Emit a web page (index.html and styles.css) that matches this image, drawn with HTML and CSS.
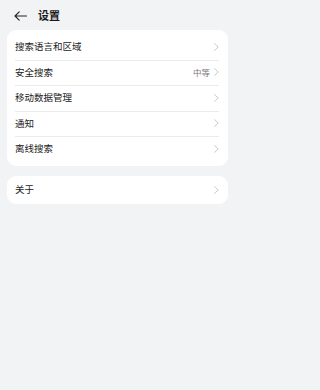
FILE: index.html
```html
<!DOCTYPE html>
<html lang="zh-CN">
<head>
<meta charset="utf-8">
<link rel="stylesheet" href="styles.css">
</head>
<body>
<div class="page">
  <header class="header">
    <svg class="back" width="13" height="10" viewBox="0 0 13 10"><path d="M12.5 5H1M5.2 0.8L1 5l4.2 4.2" fill="none" stroke="#222" stroke-width="1.1" stroke-linecap="round" stroke-linejoin="round"/></svg>
    <span class="title">设置</span>
  </header>
  <section class="card">
    <div class="row"><span class="label">搜索语言和区域</span><svg class="chev" width="5" height="8" viewBox="0 0 5 8"><path d="M0.6 0.6L4.2 4L0.6 7.4" fill="none" stroke="#c4c4c4" stroke-width="0.9" stroke-linecap="round" stroke-linejoin="round"/></svg></div>
    <div class="row"><span class="label">安全搜索</span><span class="value">中等</span><svg class="chev" width="5" height="8" viewBox="0 0 5 8"><path d="M0.6 0.6L4.2 4L0.6 7.4" fill="none" stroke="#c4c4c4" stroke-width="0.9" stroke-linecap="round" stroke-linejoin="round"/></svg></div>
    <div class="row"><span class="label">移动数据管理</span><svg class="chev" width="5" height="8" viewBox="0 0 5 8"><path d="M0.6 0.6L4.2 4L0.6 7.4" fill="none" stroke="#c4c4c4" stroke-width="0.9" stroke-linecap="round" stroke-linejoin="round"/></svg></div>
    <div class="row"><span class="label">通知</span><svg class="chev" width="5" height="8" viewBox="0 0 5 8"><path d="M0.6 0.6L4.2 4L0.6 7.4" fill="none" stroke="#c4c4c4" stroke-width="0.9" stroke-linecap="round" stroke-linejoin="round"/></svg></div>
    <div class="row"><span class="label">离线搜索</span><svg class="chev" width="5" height="8" viewBox="0 0 5 8"><path d="M0.6 0.6L4.2 4L0.6 7.4" fill="none" stroke="#c4c4c4" stroke-width="0.9" stroke-linecap="round" stroke-linejoin="round"/></svg></div>
  </section>
  <section class="card single">
    <div class="row"><span class="label">关于</span><svg class="chev" width="5" height="8" viewBox="0 0 5 8"><path d="M0.6 0.6L4.2 4L0.6 7.4" fill="none" stroke="#c4c4c4" stroke-width="0.9" stroke-linecap="round" stroke-linejoin="round"/></svg></div>
  </section>
</div>
</body>
</html>
```
FILE: styles.css
```css
html, body {
  margin: 0;
  padding: 0;
  background: #f1f3f5;
  font-family: "Noto Sans CJK SC", "Noto Sans", sans-serif;
  color: #1a1a1a;
}
.page {
  width: 235px;
  min-height: 390px;
  display: flex;
  flex-direction: column;
}
.header {
  height: 30px;
  display: flex;
  align-items: center;
  padding-left: 14px;
  box-sizing: border-box;
}
.back {
  display: block;
  margin-right: 11px;
  margin-top: 1px;
}
.title {
  font-size: 11px;
  font-weight: 700;
  line-height: 1;
}
.card {
  margin: 0 7px;
  background: #fff;
  border-radius: 9px;
  padding: 4px 9px 4px 8px;
  display: flex;
  flex-direction: column;
}
.card.single {
  margin-top: 10px;
  padding: 1px 9px 1px 8px;
}
.row {
  height: 25.5px;
  display: flex;
  align-items: center;
  position: relative;
}
.single .row {
  height: 26px;
}
.row + .row::before {
  content: "";
  position: absolute;
  left: 0;
  right: 0;
  top: 0;
  border-top: 1px solid #ebebeb;
}
.label {
  flex: 1;
  font-size: 9.5px;
  line-height: 1;
}
.value {
  font-size: 8.5px;
  color: #7a7a7a;
  margin-right: 4px;
  line-height: 1;
}
.chev {
  display: block;
  margin-right: 0;
}
```
